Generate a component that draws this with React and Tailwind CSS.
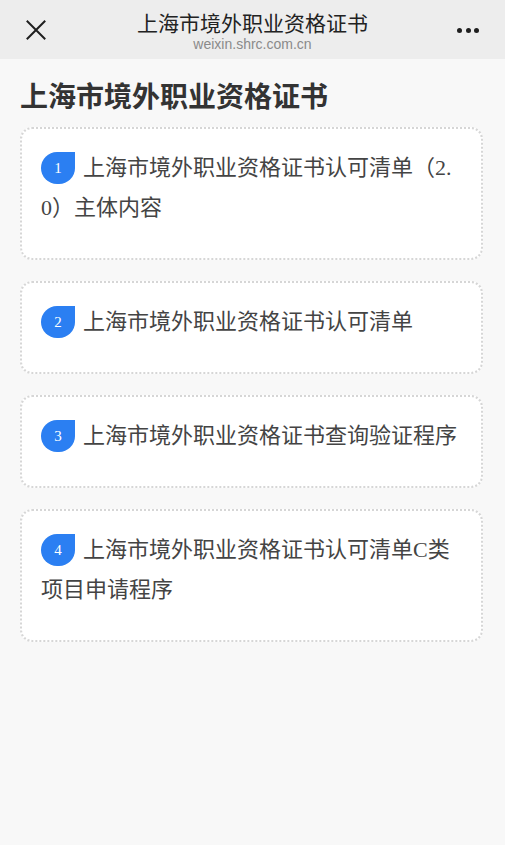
const items = [
  { n: '1', lines: ['上海市境外职业资格证书认可清单（2.', '0）主体内容'] },
  { n: '2', lines: ['上海市境外职业资格证书认可清单'] },
  { n: '3', lines: ['上海市境外职业资格证书查询验证程序'] },
  { n: '4', lines: ['上海市境外职业资格证书认可清单C类', '项目申请程序'] },
];

function CloseIcon() {
  return (
    <svg width="20" height="20" viewBox="0 0 20 20" className="text-[#1f1f1f]">
      <path d="M1.5 1.5 L18.5 18.5 M18.5 1.5 L1.5 18.5" stroke="currentColor" strokeWidth="2" strokeLinecap="square" />
    </svg>
  );
}

function Badge({ n }) {
  return (
    <span className="inline-flex items-center justify-center align-middle w-[34px] h-[32px] mr-[8px] -mt-[3px] rounded-full rounded-tr-none bg-[#2b7ff2] text-white text-[15px] leading-none font-['Liberation_Serif',serif]">
      {n}
    </span>
  );
}

export default function App() {
  return (
    <div className="min-h-[845px] bg-[#f8f8f8] font-['Noto_Sans_CJK_SC',sans-serif]">
      {/* Top bar */}
      <div className="h-[59px] bg-[#ededed] flex items-center justify-between pl-[26px] pr-[26px]">
        <div className="w-[22px] flex items-center mt-[1px]">
          <CloseIcon />
        </div>
        <div className="flex flex-col items-center pt-[2px]">
          <div className="text-[21px] leading-[24px] text-[#222]">上海市境外职业资格证书</div>
          <div className="text-[14px] leading-[16px] text-[#8a8a8a] font-['Liberation_Sans',sans-serif] mt-[2px]">weixin.shrc.com.cn</div>
        </div>
        <div className="w-[22px] flex items-center justify-end gap-[3.5px] mt-[1px]">
          <span className="w-[5px] h-[5px] rounded-full bg-[#1f1f1f]" />
          <span className="w-[5px] h-[5px] rounded-full bg-[#1f1f1f]" />
          <span className="w-[5px] h-[5px] rounded-full bg-[#1f1f1f]" />
        </div>
      </div>

      <div className="pl-[20px] pr-[22px] pt-[17px]">
        <h1 className="text-[28px] leading-[38px] font-bold text-[#333]">上海市境外职业资格证书</h1>

        <div className="mt-[13px] flex flex-col gap-[21px]">
          {items.map((it) => (
            <div
              key={it.n}
              className="bg-white rounded-[12px] border-2 border-dotted border-[#d6d6d6] pl-[19px] pr-[12px] pt-[19px] pb-[30px] text-[22px] leading-[40px] text-[#444] font-['Liberation_Serif','Noto_Sans_CJK_SC',serif]"
            >
              <Badge n={it.n} />
              {it.lines.map((l, i) => (
                <span key={i}>
                  {i > 0 && <br />}
                  {l}
                </span>
              ))}
            </div>
          ))}
        </div>
      </div>
    </div>
  );
}
